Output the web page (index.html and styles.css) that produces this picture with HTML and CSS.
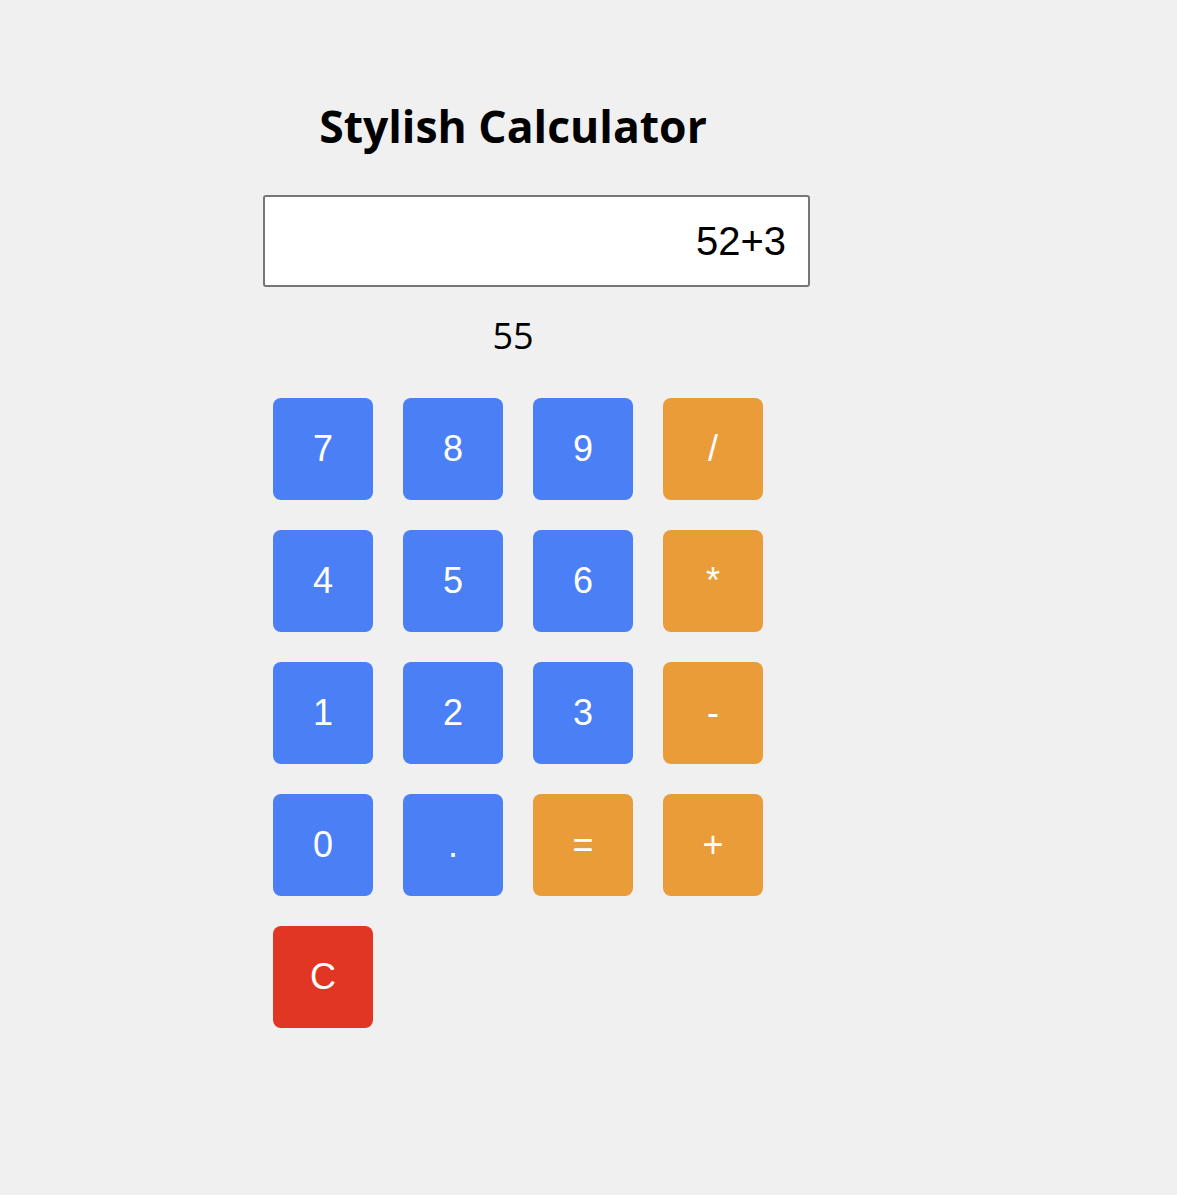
FILE: index.html
```html
<!DOCTYPE html>
<html lang="en">
<head>
<meta charset="utf-8">
<title>Stylish Calculator</title>
<link rel="stylesheet" href="styles.css">
</head>
<body>
<div class="calculator">
  <h1 class="title">Stylish Calculator</h1>
  <input class="display" type="text" value="52+3" readonly>
  <div class="result">55</div>
  <div class="keys">
    <button class="key num">7</button>
    <button class="key num">8</button>
    <button class="key num">9</button>
    <button class="key op">/</button>
    <button class="key num">4</button>
    <button class="key num">5</button>
    <button class="key num">6</button>
    <button class="key op">*</button>
    <button class="key num">1</button>
    <button class="key num">2</button>
    <button class="key num">3</button>
    <button class="key op">-</button>
    <button class="key num">0</button>
    <button class="key num">.</button>
    <button class="key op">=</button>
    <button class="key op">+</button>
    <button class="key clear">C</button>
  </div>
</div>
</body>
</html>
```
FILE: styles.css
```css
html, body {
  margin: 0;
  padding: 0;
  background: #f0f0f0;
}

body {
  font-family: "Open Sans", "Noto Sans", sans-serif;
  color: #000;
}

.calculator {
  width: 500px;
  margin-left: 263px;
  padding-top: 96px;
}

.title {
  margin: 0 0 39px 0;
  height: 60px;
  line-height: 60px;
  font-size: 44.5px;
  font-weight: 700;
  text-align: center;
  white-space: nowrap;
}

.display {
  display: block;
  box-sizing: border-box;
  width: 547px;
  height: 92px;
  margin: 0;
  padding: 0 22px 0 20px;
  border: 2px solid #767676;
  border-radius: 3px;
  background: #fff;
  font-family: "Liberation Sans", Arial, sans-serif;
  font-size: 40px;
  color: #000;
  text-align: right;
  outline: none;
}

.result {
  margin-top: 24px;
  height: 50px;
  line-height: 50px;
  font-size: 36px;
  text-align: center;
}

.keys {
  margin-top: 37px;
  padding-left: 10px;
  display: grid;
  grid-template-columns: repeat(4, 100px);
  grid-auto-rows: 102px;
  column-gap: 30px;
  row-gap: 30px;
}

.key {
  display: flex;
  align-items: center;
  justify-content: center;
  padding: 0;
  border: none;
  border-radius: 8px;
  color: #fff;
  font-family: "Liberation Sans", Arial, sans-serif;
  font-size: 36px;
  line-height: normal;
  cursor: pointer;
}

.num {
  background: #4b7ff5;
}

.op {
  background: #e99c38;
}

.clear {
  background: #e23624;
}
```
